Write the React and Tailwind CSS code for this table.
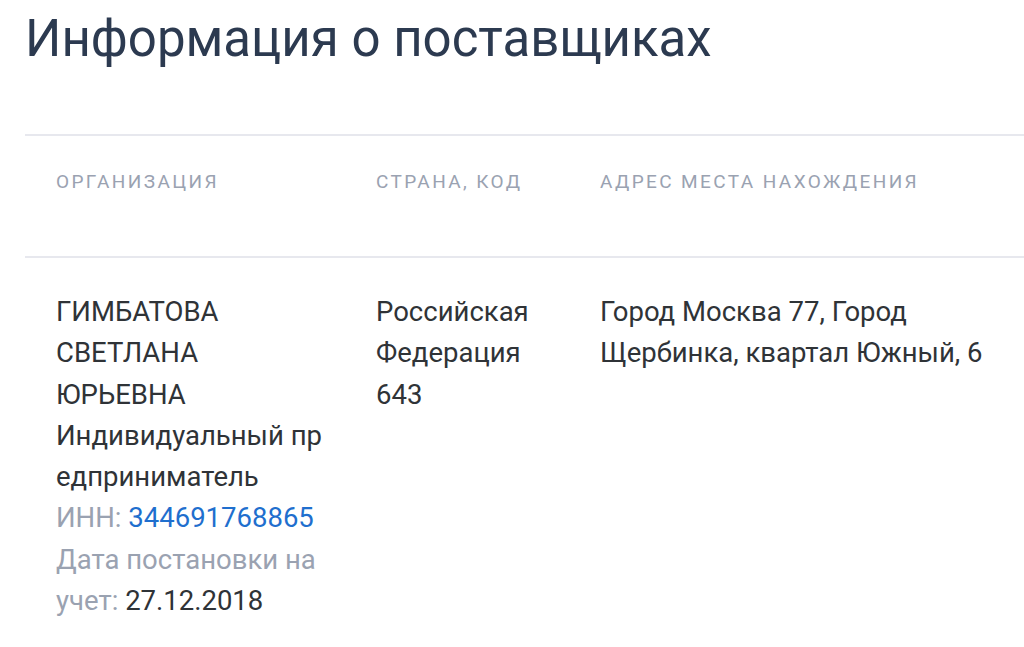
export default function App() {
  return (
    <div className="w-[1024px] h-[647px] overflow-hidden bg-white font-['Roboto',sans-serif]">
      <h1 className="pl-[25px] pt-[13px] text-[51px] leading-none font-normal text-[#2c3a50]">
        Информация о поставщиках
      </h1>
      <div className="ml-[25px] mt-[70px] w-[1020px]">
        <div className="grid grid-cols-[320px_224px_1fr] border-t-2 border-[#e7e8ee] h-[122px] pt-[36px] text-[19px] leading-[20px] tracking-[2.4px] text-[#9aa2b1]">
          <div className="pl-[31px]">ОРГАНИЗАЦИЯ</div>
          <div className="pl-[31px]">СТРАНА, КОД</div>
          <div className="pl-[31px]">АДРЕС МЕСТА НАХОЖДЕНИЯ</div>
        </div>
        <div className="grid grid-cols-[320px_224px_1fr] border-t-2 border-[#e7e8ee] pt-[33px] text-[27.5px] leading-[41.3px] text-[#2f3337]">
          <div className="pl-[31px] pr-[14px]">
            <div>ГИМБАТОВА СВЕТЛАНА ЮРЬЕВНА</div>
            <div className="break-all">Индивидуальный предприниматель</div>
            <div>
              <span className="text-[#9aa2b1]">ИНН: </span>
              <span className="text-[#1f6fce]">344691768865</span>
            </div>
            <div className="text-[#9aa2b1]">
              Дата постановки на учет: <span className="text-[#2f3337]">27.12.2018</span>
            </div>
          </div>
          <div className="pl-[31px] pr-[16px]">
            <div>Российская Федерация</div>
            <div>643</div>
          </div>
          <div className="pl-[31px] pr-[35px]">
            Город Москва 77, Город Щербинка, квартал Южный, 6
          </div>
        </div>
      </div>
    </div>
  );
}
